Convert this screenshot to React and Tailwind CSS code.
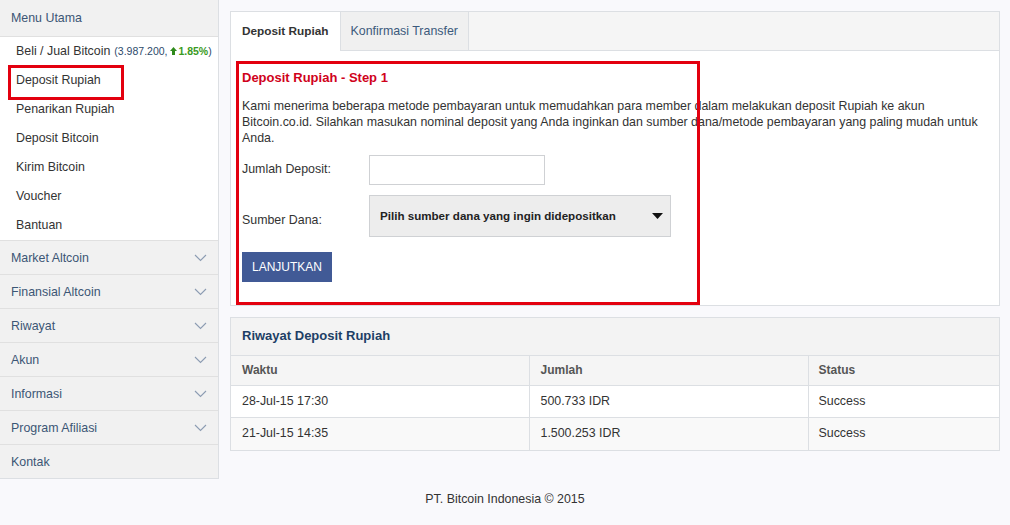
import React from "react";

const subMenu = [
  "Deposit Rupiah",
  "Penarikan Rupiah",
  "Deposit Bitcoin",
  "Kirim Bitcoin",
  "Voucher",
  "Bantuan",
];

const groups = [
  "Market Altcoin",
  "Finansial Altcoin",
  "Riwayat",
  "Akun",
  "Informasi",
  "Program Afiliasi",
];

const history = [
  { time: "28-Jul-15 17:30", amount: "500.733 IDR", status: "Success" },
  { time: "21-Jul-15 14:35", amount: "1.500.253 IDR", status: "Success" },
];

const Chevron = () => (
  <svg width="13" height="8" viewBox="0 0 13 8" fill="none">
    <path d="M1 1l5.5 5.5L12 1" stroke="#8c9cb2" strokeWidth="1.1" />
  </svg>
);

// small solid up arrow next to the price change
const UpArrow = () => (
  <svg width="7" height="8" viewBox="0 0 7 8" className="inline-block mr-[1px] -mt-[2px]">
    <path d="M3.5 0L7 4H5v4H2V4H0z" fill="#2f8a1c" />
  </svg>
);

const Sidebar = () => (
  <aside className="w-[219px] shrink-0 border-r border-b border-[#dcdfe3] bg-[#f1f1f1] text-[12.4px]">
    <div className="h-[37px] flex items-center px-[11px] border-b border-[#e0e0e0] text-[#3c5675]">
      Menu Utama
    </div>
    <div className="bg-white">
      <div className="h-[29px] flex items-center px-[16px] text-[#333] whitespace-nowrap">
        <span>
          Beli / Jual Bitcoin
          <span className="ml-[4px] text-[10.5px] text-[#2d4a6b]">
            (3.987.200,{" "}
            <span className="text-[#3a9a22] font-bold">
              <UpArrow />
              1.85%
            </span>
            )
          </span>
        </span>
      </div>
      {subMenu.map((item, i) => (
        <div key={item} className="relative h-[29px] flex items-center px-[16px] text-[#333]">
          {item}
          {i === 0 && (
            <div className="absolute left-[8px] top-[-1px] w-[116px] h-[35px] border-[3px] border-[#e3000f]" />
          )}
        </div>
      ))}
    </div>
    {groups.map((g) => (
      <div
        key={g}
        className="h-[34px] flex items-center justify-between pl-[11px] pr-[11px] pt-[1px] border-t border-[#e0e0e0] text-[#3c5675]"
      >
        {g}
        <Chevron />
      </div>
    ))}
    <div className="h-[34px] flex items-center px-[11px] pt-[1px] border-t border-[#e0e0e0] text-[#3c5675]">
      Kontak
    </div>
  </aside>
);

const DepositPanel = () => (
  <section className="relative border border-[#dcdfe3] bg-white">
    <div className="flex h-[39px] bg-[#f5f5f5] border-b border-[#dcdfe3]">
      <div className="relative -mb-px flex items-center px-[11px] bg-white border-r border-[#dcdfe3] font-bold text-[11.8px] text-[#333]">
        Deposit Rupiah
      </div>
      <div className="flex items-center px-[10px] bg-[#f0f0f0] border-r border-[#dcdfe3] text-[#3c5a7c]">
        Konfirmasi Transfer
      </div>
    </div>
    <div className="px-[11px] pt-[17px] pb-[23px] text-[#333]">
      <h2 className="text-[13px] font-bold text-[#d0021b]">Deposit Rupiah - Step 1</h2>
      <p className="mt-[10px] leading-[16px]">
        Kami menerima beberapa metode pembayaran untuk memudahkan para member dalam melakukan deposit Rupiah ke akun
        Bitcoin.co.id. Silahkan masukan nominal deposit yang Anda inginkan dan sumber dana/metode pembayaran yang paling mudah untuk
        Anda.
      </p>
      <div className="mt-[9px] flex items-center">
        <label className="w-[127px]">Jumlah Deposit:</label>
        <input className="w-[176px] h-[30px] border border-[#cfd1d4] bg-white outline-none" />
      </div>
      <div className="mt-[10px] flex items-center">
        <label className="w-[127px] pt-[10px]">Sumber Dana:</label>
        <div className="w-[302px] h-[42px] flex items-center justify-between pl-[10px] pr-[7px] border border-[#cfd1d4] bg-[#ededed] font-bold text-[11.6px] text-[#222]">
          Pilih sumber dana yang ingin didepositkan
          <svg width="11" height="6" viewBox="0 0 11 6">
            <path d="M0 0h11L5.5 6z" fill="#111" />
          </svg>
        </div>
      </div>
      <button className="mt-[15px] w-[90px] h-[30px] bg-[#415a96] text-white text-[12px]">LANJUTKAN</button>
    </div>
    <div className="absolute left-[5px] top-[49px] w-[464px] h-[244px] border-[3px] border-[#e3000f] pointer-events-none" />
  </section>
);

const HistoryPanel = () => (
  <section className="border border-[#dcdfe3] bg-white">
    <div className="h-[38px] flex items-center px-[11px] bg-[#f3f3f3] border-b border-[#dcdfe3] text-[13px] font-bold text-[#1d3f66]">
      Riwayat Deposit Rupiah
    </div>
    <table className="w-full border-collapse">
      <thead>
        <tr className="h-[30px] bg-[#f5f5f5] text-[#555] text-[12px] font-bold">
          <td className="w-[298px] px-[11px] border-r border-[#dcdfe3]">Waktu</td>
          <td className="w-[279px] px-[11px] border-r border-[#dcdfe3]">Jumlah</td>
          <td className="px-[10px]">Status</td>
        </tr>
      </thead>
      <tbody className="text-[#333]">
        {history.map((row, i) => (
          <tr key={row.time} className={`h-[32px] border-t border-[#dcdfe3] ${i % 2 ? "bg-[#f9f9f9]" : "bg-white"}`}>
            <td className="px-[11px] border-r border-[#dcdfe3]">{row.time}</td>
            <td className="px-[11px] border-r border-[#dcdfe3]">{row.amount}</td>
            <td className="px-[10px]">{row.status}</td>
          </tr>
        ))}
      </tbody>
    </table>
  </section>
);

export default function App() {
  return (
    <div className="min-h-[525px] bg-[#f9f9fc] text-[12.4px] font-['Liberation_Sans',Arial,sans-serif]">
      <div className="flex">
        <Sidebar />
        <main className="flex-1 pl-[11px] pr-[10px] pt-[11px] flex flex-col gap-[11px]">
          <DepositPanel />
          <HistoryPanel />
        </main>
      </div>
      <footer className="pt-[11px] text-center text-[#333]">PT. Bitcoin Indonesia © 2015</footer>
    </div>
  );
}
